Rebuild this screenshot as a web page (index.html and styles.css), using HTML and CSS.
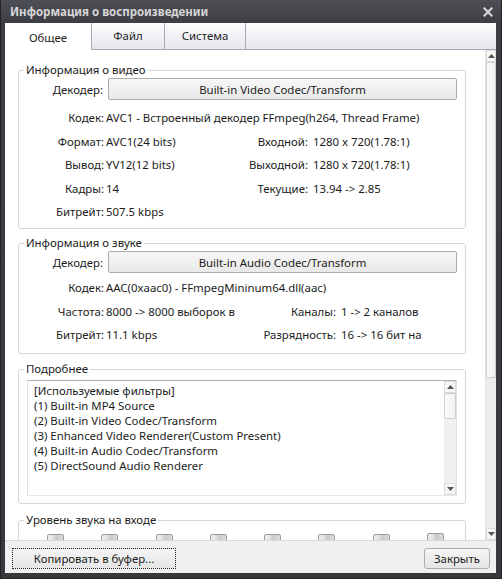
FILE: index.html
```html
<!DOCTYPE html>
<html lang="ru">
<head>
<meta charset="utf-8">
<title>Информация о воспроизведении</title>
<link rel="stylesheet" href="styles.css">
</head>
<body>
<div class="window">
  <div class="titlebar">
    <span class="title">Информация о воспроизведении</span>
    <svg class="close" width="10" height="10" viewBox="0 0 10 10"><path d="M1.5 1.5 L8.5 8.5 M8.5 1.5 L1.5 8.5" stroke="#d6d6d6" stroke-width="2.2" stroke-linecap="square"/></svg>
  </div>
  <div class="client">
    <div class="tabs">
      <div class="tab tab-general active">Общее</div>
      <div class="tab tab-file">Файл</div>
      <div class="tab tab-system">Система</div>
    </div>
    <div class="main">
      <div class="content">
        <fieldset class="group group-video">
          <legend>Информация о видео</legend>
          <div class="decoder-row">
            <span class="lbl">Декодер:</span>
            <div class="decoder-btn">Built-in Video Codec/Transform</div>
          </div>
          <div class="info-grid video-grid">
            <span class="lbl">Кодек:</span><span class="val wide">AVC1 - Встроенный декодер FFmpeg(h264, Thread Frame)</span>
            <span class="lbl">Формат:</span><span class="val">AVC1(24 bits)</span><span class="lbl2">Входной:</span><span class="val2">1280 x 720(1.78:1)</span>
            <span class="lbl">Вывод:</span><span class="val">YV12(12 bits)</span><span class="lbl2">Выходной:</span><span class="val2">1280 x 720(1.78:1)</span>
            <span class="lbl">Кадры:</span><span class="val">14</span><span class="lbl2">Текущие:</span><span class="val2">13.94 -&gt; 2.85</span>
            <span class="lbl">Битрейт:</span><span class="val">507.5 kbps</span>
          </div>
        </fieldset>

        <fieldset class="group group-audio">
          <legend>Информация о звуке</legend>
          <div class="decoder-row">
            <span class="lbl">Декодер:</span>
            <div class="decoder-btn">Built-in Audio Codec/Transform</div>
          </div>
          <div class="info-grid audio-grid">
            <span class="lbl">Кодек:</span><span class="val wide">AAC(0xaac0) - FFmpegMininum64.dll(aac)</span>
            <span class="lbl">Частота:</span><span class="val">8000 -&gt; 8000 выборок в</span><span class="lbl2">Каналы:</span><span class="val2">1 -&gt; 2 каналов</span>
            <span class="lbl">Битрейт:</span><span class="val">11.1 kbps</span><span class="lbl2">Разрядность:</span><span class="val2">16 -&gt; 16 бит на</span>
          </div>
        </fieldset>

        <fieldset class="group group-details">
          <legend>Подробнее</legend>
          <div class="details">
            <div class="details-text">
              <div>[Используемые фильтры]</div>
              <div>(1) Built-in MP4 Source</div>
              <div>(2) Built-in Video Codec/Transform</div>
              <div>(3) Enhanced Video Renderer(Custom Present)</div>
              <div>(4) Built-in Audio Codec/Transform</div>
              <div>(5) DirectSound Audio Renderer</div>
            </div>
            <div class="sb sb-inner">
              <div class="sb-btn"><svg width="7" height="4" viewBox="0 0 7 4"><path d="M0 4 L3.5 0 L7 4 Z" fill="#555"/></svg></div>
              <div class="sb-thumb"></div>
              <div class="sb-track"></div>
              <div class="sb-btn"><svg width="7" height="4" viewBox="0 0 7 4"><path d="M0 0 L3.5 4 L7 0 Z" fill="#555"/></svg></div>
            </div>
          </div>
        </fieldset>

        <fieldset class="group group-level">
          <legend>Уровень звука на входе</legend>
          <div class="sliders">
            <span class="knob"></span><span class="knob"></span><span class="knob"></span><span class="knob"></span>
            <span class="knob"></span><span class="knob"></span><span class="knob"></span><span class="knob knob-last"></span>
          </div>
        </fieldset>
      </div>
      <div class="sb sb-window">
        <div class="sb-btn"><svg width="7" height="4" viewBox="0 0 7 4"><path d="M0 4 L3.5 0 L7 4 Z" fill="#555"/></svg></div>
        <div class="sb-thumb sb-thumb-window"></div>
        <div class="sb-track"></div>
        <div class="sb-btn"><svg width="7" height="4" viewBox="0 0 7 4"><path d="M0 0 L3.5 4 L7 0 Z" fill="#555"/></svg></div>
      </div>
    </div>
    <div class="footer">
      <button class="btn btn-copy"><span class="focus">Копировать в буфер...</span></button>
      <button class="btn btn-close">Закрыть</button>
    </div>
  </div>
</div>
</body>
</html>
```

FILE: styles.css
```css
* { box-sizing: border-box; }

html, body {
  margin: 0;
  padding: 0;
}

body {
  width: 502px;
  height: 579px;
  overflow: hidden;
  background: #2e2e33;
  font-family: "Noto Sans", "Open Sans", "DejaVu Sans", sans-serif;
  font-size: 11.4px;
  color: #1b1b1b;
}

.window {
  width: 502px;
  height: 579px;
  display: flex;
  flex-direction: column;
  padding: 0 5px 5px 4px;
  background: linear-gradient(#4e4e56 0, #3d3d44 23px, #37373d 100%);
  border: 1px solid #232327;
  border-top: none;
}

.titlebar {
  height: 23px;
  flex: none;
  display: flex;
  align-items: center;
  justify-content: space-between;
  padding: 0 3px 0 5px;
}

.title {
  color: #d6d6d6;
  font-weight: bold;
  font-size: 11.5px;
}

.client {
  flex: 1;
  min-height: 0;
  display: flex;
  flex-direction: column;
  background: #fff;
}

/* tabs */
.tabs {
  height: 27px;
  flex: none;
  display: flex;
  background: linear-gradient(#fcfcfd, #e6e7ee);
  border-bottom: 1px solid #a8aab3;
}

.tab {
  display: flex;
  align-items: center;
  justify-content: center;
  border-right: 1px solid #a8aab3;
  padding-bottom: 1px;
  color: #1e1e1e;
}

.tab.active {
  background: #fff;
  height: 27px;
  padding-top: 2px;
  padding-bottom: 0;
}

.tab-general { width: 87px; }
.tab-file { width: 73px; }
.tab-system { width: 81px; }

/* main area */
.main {
  flex: 1;
  min-height: 0;
  display: flex;
}

.content {
  flex: 1;
  min-width: 0;
  overflow: hidden;
  padding: 12px 19px 0 13px;
}

.group {
  margin: 0;
  padding: 0;
  min-width: 0;
  border: 1px solid #d6d6d6;
  border-radius: 3px;
}

.group legend {
  margin-left: 5px;
  padding: 0 2px;
  line-height: 16px;
}

.group-video { padding-bottom: 4px; }
.group-audio { margin-top: 6.5px; padding-bottom: 6px; }
.group-details { margin-top: 7.5px; padding: 3px 0 7px; }
.group-level { margin-top: 8px; padding-top: 6px; height: 60px; }

.decoder-row {
  display: flex;
  align-items: center;
  height: 22px;
  padding-right: 8px;
}

.decoder-row .lbl {
  width: 84px;
  text-align: right;
}

.decoder-btn {
  flex: 1;
  margin-left: 5px;
  height: 22px;
  display: flex;
  align-items: center;
  justify-content: center;
  border: 1px solid #adadad;
  border-radius: 2px;
  background: linear-gradient(#f7f7f7, #e9e9e9);
}

.info-grid {
  display: grid;
  grid-template-columns: 85px 119px 85px 1fr;
  grid-auto-rows: 23.5px;
  align-items: center;
  white-space: nowrap;
}

.video-grid { margin-top: 6px; }
.audio-grid { margin-top: 3px; grid-template-columns: 85px 119px 113px 1fr; }

.info-grid .lbl { text-align: right; }
.info-grid .val { padding-left: 2px; }
.info-grid .wide { grid-column: 2 / 5; }
.info-grid .lbl2 { text-align: right; }
.info-grid .val2 { padding-left: 5px; }

/* details textbox */
.details {
  margin: 0 8px;
  height: 116px;
  display: flex;
  border: 1px solid;
  border-color: #abadb3 #dbdfe6 #e3e9ef #e2e3ea;
}

.details-text {
  flex: 1;
  padding: 2px 6px;
  line-height: 15px;
  white-space: nowrap;
  overflow: hidden;
}

/* scrollbars */
.sb {
  display: flex;
  flex-direction: column;
  background: #f0f0f0;
}

.sb-inner { width: 12px; }

.sb-window {
  width: 11px;
  border-left: 1px solid #e4e4e4;
  background: #ececec;
}

.sb-btn {
  height: 12px;
  flex: none;
  display: flex;
  align-items: center;
  justify-content: center;
  background: #f6f6f6;
  border: 1px solid #dcdcdc;
}

.sb-thumb {
  height: 26px;
  flex: none;
  background: linear-gradient(90deg, #fbfbfb, #f1f1f1);
  border: 1px solid #cfcfcf;
  border-radius: 1px;
}

.sb-thumb-window { height: 316px; }

.sb-track { flex: 1; }

/* sliders */
.sliders {
  display: flex;
  gap: 37.3px;
  padding-left: 28px;
}

.knob {
  width: 17px;
  height: 14px;
  border: 1px solid #9c9c9c;
  border-radius: 2px 2px 0 0;
  background: linear-gradient(90deg, #ededed 0, #e4e4e4 30%, #c9c9c9 55%, #dcdcdc 100%);
}

.knob-last { margin-top: -1px; }

/* footer */
.footer {
  height: 33px;
  flex: none;
  display: flex;
  justify-content: space-between;
  align-items: flex-start;
  padding: 7px 6px 0 7px;
  background: #f0f0f0;
  border-top: 1px solid #d9d9d9;
}

.btn {
  height: 21px;
  padding: 0;
  font: inherit;
  color: #1b1b1b;
  border: 1px solid #acacac;
  border-radius: 3px;
  background: linear-gradient(#f6f6f6, #e4e4e4);
  display: flex;
  align-items: center;
  justify-content: center;
}

.btn-copy {
  width: 164px;
  border: 1px dotted #222;
  border-radius: 0;
  background: linear-gradient(#f4f4f4, #e6e6e6);
}

.btn-close { width: 66px; }
```
